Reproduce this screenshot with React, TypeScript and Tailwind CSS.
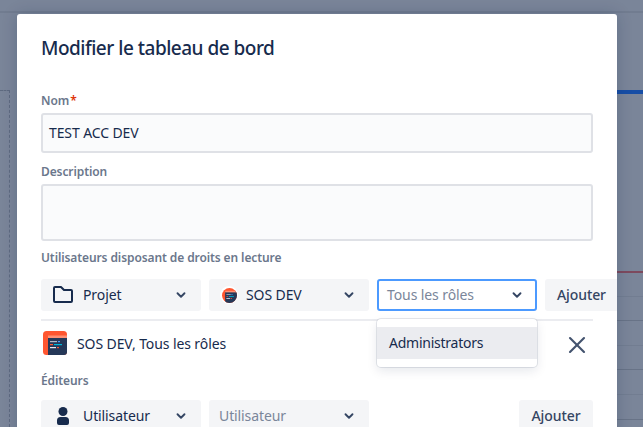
import { ChevronDown, X } from "lucide-react";

const INK = "text-[#172b4d]";

function Chevron() {
  return <ChevronDown size={14} strokeWidth={3.2} className="text-[#344563]" />;
}

function FieldLabel({ children }: { children: React.ReactNode }) {
  return <div className="text-[12px] leading-4 font-semibold tracking-[-0.1px] text-[#6b778c]">{children}</div>;
}

function Logo({ size }: { size: number }) {
  return (
    <svg width={size} height={size} viewBox="0 0 24 24" className="shrink-0">
      <rect width="24" height="24" rx="3.5" fill="#ff5630" />
      <path d="M5 5h19v16a3 3 0 0 1-3 3H5z" fill="#253858" />
      <rect x="5" y="4.5" width="19" height="2.5" fill="#ff8f73" />
      <rect x="7" y="10" width="7" height="1.2" fill="#b3bac5" />
      <rect x="15" y="10" width="2" height="1.2" fill="#4c9aff" />
      <rect x="7" y="13" width="3" height="1.2" fill="#ff5630" />
      <rect x="11" y="13" width="8" height="1.2" fill="#00b8d9" />
      <rect x="7" y="16" width="6" height="1.2" fill="#ebecf0" />
      <rect x="14" y="16" width="2" height="1.2" fill="#ff5630" />
    </svg>
  );
}

function Select({ icon, label, muted, w }: { icon?: React.ReactNode; label: string; muted?: boolean; w: string }) {
  return (
    <div className={`flex h-8 shrink-0 items-center rounded-[3px] bg-[#f4f5f7] ${w}`}>
      {icon}
      <span className={`flex-1 truncate ${muted ? "text-[#7a869a]" : INK}`}>{label}</span>
      <span className="mr-[13px]"><Chevron /></span>
    </div>
  );
}

export default function App() {
  return (
    <div
      className="relative h-[427px] w-[643px] overflow-hidden bg-[#7a8599] text-[14px] leading-5 tracking-[-0.1px]"
      style={{ fontFamily: '"Noto Sans", sans-serif' }}
    >
      {/* page behind the overlay */}
      <div className="h-[13px] border-b-2 border-[#717c90] bg-[#7a8599]" />
      <div className="absolute top-[90px] bottom-0 left-0 w-[10px] border-t border-r border-dashed border-[#5e6a80]" />
      <div className="absolute top-[90px] right-0 h-1 w-[26px] bg-[#174ea6]" />
      <div className="absolute top-[271px] right-0 h-0.5 w-[26px] bg-[#7d4a5e]" />
      <div className="absolute top-[296px] right-0 h-px w-[26px] bg-[#727d91]" />
      <div className="absolute top-[320px] right-0 h-px w-[26px] bg-[#687387]" />
      <div className="absolute top-[345px] right-0 h-px w-[26px] bg-[#727d91]" />
      <div className="absolute top-[369px] right-0 h-px w-[26px] bg-[#687387]" />
      <div className="absolute top-[394px] right-0 h-px w-[26px] bg-[#727d91]" />
      <div className="absolute top-[419px] right-0 h-px w-[26px] bg-[#687387]" />

      {/* dialog */}
      <div className="absolute top-[14px] left-[17px] h-[430px] w-[600px] overflow-hidden rounded-[3px] bg-white px-6 pt-[20px] shadow-[0_0_16px_rgba(9,30,66,0.2)]">
        <h1 className={`text-[19px] leading-7 font-medium tracking-[-0.5px] ${INK}`}>Modifier le tableau de bord</h1>

        <div className="mt-[31px]">
          <FieldLabel>
            Nom<span className="ml-px text-[#de350b]">*</span>
          </FieldLabel>
          <div className={`mt-1 flex h-10 items-center rounded-[3px] border-2 border-[#dfe1e6] bg-[#fafbfc] px-1.5 ${INK}`}>
            TEST ACC DEV
          </div>
        </div>

        <div className="mt-[11px]">
          <FieldLabel>Description</FieldLabel>
          <div className="mt-1 h-[57px] rounded-[3px] border-2 border-[#dfe1e6] bg-[#fafbfc]" />
        </div>

        <div className="mt-[9px]">
          <FieldLabel>Utilisateurs disposant de droits en lecture</FieldLabel>
          <div className="relative mt-[13px] flex gap-2">
            <Select
              w="w-[160px]"
              label="Projet"
              icon={
                <svg width="24" height="24" viewBox="0 0 24 24" className="mr-2 ml-2.5 shrink-0" fill="none">
                  <path d="M3 5a1 1 0 0 1 1-1h6l3 3h7a1 1 0 0 1 1 1v10a1 1 0 0 1-1 1H4a1 1 0 0 1-1-1z" stroke="#172b4d" strokeWidth="2" strokeLinejoin="round" />
                </svg>
              }
            />
            <Select
              w="w-[160px]"
              label="SOS DEV"
              icon={
                <span className="mr-2 ml-[11px] flex h-[18px] w-[18px] shrink-0 items-center justify-center rounded-full bg-white">
                  <span className="h-[15px] w-[15px] overflow-hidden rounded-full">
                    <Logo size={15} />
                  </span>
                </span>
              }
            />
            <div className="flex h-8 w-[160px] shrink-0 items-center rounded-[3px] border-2 border-[#4c9aff] bg-white pl-2 text-[#7a869a]">
              <span className="flex-1">Tous les rôles</span>
              <span className="mr-[11px]"><Chevron /></span>
            </div>
            <div className="flex h-8 w-[80px] shrink-0 items-center rounded-[3px] bg-[#f4f5f7] pl-3 font-medium text-[#344563]">Ajouter</div>

            {/* open menu */}
            <div className="absolute top-10 left-[336px] z-10 h-[48px] w-[160px] rounded-[4px] bg-white py-2 shadow-[0_0_0_1px_rgba(9,30,66,0.1),0_4px_11px_rgba(9,30,66,0.1)]">
              <div className={`flex h-8 items-center bg-[#ebecf0] px-3 tracking-[-0.25px] ${INK}`}>Administrators</div>
            </div>
          </div>
          <div className="mt-2 h-0.5 w-[552px] bg-[#ebecf0]" />
          <div className="mt-[10px] flex h-6 w-[552px] items-center pl-0.5">
            <Logo size={24} />
            <span className={`mt-0.5 ml-[10px] flex-1 ${INK}`}>SOS DEV, Tous les rôles</span>
            <X size={28} strokeWidth={1.8} className="mt-1 mr-0.5 text-[#42526e]" />
          </div>
        </div>

        <div className="mt-[18px]">
          <FieldLabel>Éditeurs</FieldLabel>
          <div className="mt-[11px] flex w-[552px] gap-2">
            <Select
              w="w-[160px]"
              label="Utilisateur"
              icon={
                <svg width="24" height="24" viewBox="0 0 24 24" className="mr-2 ml-2.5 shrink-0" fill="#172b4d">
                  <circle cx="12" cy="7.5" r="4.5" />
                  <path d="M6 16.5a3.5 3.5 0 0 1 3.5-3.5h5a3.5 3.5 0 0 1 3.5 3.5V19a2 2 0 0 1-2 2H8a2 2 0 0 1-2-2z" />
                </svg>
              }
            />
            <Select w="w-[160px] pl-2.5" label="Utilisateur" muted />
            <div className="ml-auto flex h-8 w-[74px] items-center justify-center rounded-[3px] bg-[#f4f5f7] font-medium text-[#344563]">Ajouter</div>
          </div>
        </div>
      </div>
    </div>
  );
}
